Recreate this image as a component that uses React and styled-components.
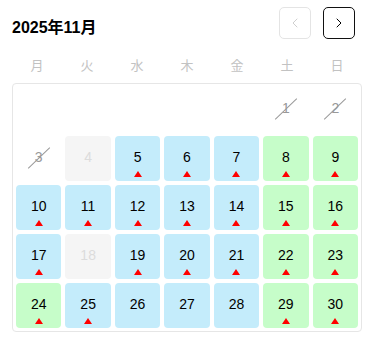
import React from 'react';
import styled, { createGlobalStyle } from 'styled-components';
import { ChevronLeft, ChevronRight } from 'lucide-react';

const GlobalStyle = createGlobalStyle`
  body {
    margin: 0;
    background: #fff;
    font-family: "Liberation Sans", "Noto Sans CJK JP", sans-serif;
  }
`;

const Page = styled.div`
  width: 350px;
  padding: 7px 12px;
`;

const Header = styled.div`
  display: flex;
  justify-content: space-between;
  align-items: center;
  height: 32px;
`;

const Title = styled.div`
  padding-top: 5px;
  font-size: 16px;
  font-weight: 700;
  color: #000;
`;

const NavGroup = styled.div`
  display: flex;
  gap: 12px;
  margin-right: 7px;
`;

const NavButton = styled.button`
  display: flex;
  align-items: center;
  justify-content: center;
  width: 32px;
  height: 32px;
  padding: 0;
  background: #fff;
  border: 1px solid ${(p) => (p.disabled ? '#e4e4e4' : '#111')};
  border-radius: 5px;
  color: ${(p) => (p.disabled ? '#cfcfcf' : '#000')};
`;

const WeekRow = styled.div`
  display: grid;
  grid-template-columns: repeat(7, 50px);
  margin-top: 13px;
  height: 24px;
  align-items: center;
`;

const WeekDay = styled.div`
  text-align: center;
  font-size: 13px;
  color: #c2c2c2;
`;

const Board = styled.div`
  margin-top: 7px;
  border: 1px solid #e6e6e6;
  border-radius: 4px;
  padding: 3px;
  display: grid;
  grid-template-columns: repeat(7, 1fr);
  grid-auto-rows: 45px;
  gap: 4px;
`;

const tones = {
  weekday: { bg: '#c4ecfb', fg: '#000' },
  holiday: { bg: '#c6fdc9', fg: '#000' },
  closed: { bg: '#f5f5f5', fg: '#dcdcdc' },
  past: { bg: 'transparent', fg: '#999' },
  empty: { bg: 'transparent', fg: 'transparent' },
};

const Cell = styled.div`
  position: relative;
  display: flex;
  flex-direction: column;
  align-items: center;
  padding-top: 13px;
  border-radius: 4px;
  background: ${(p) => tones[p.$tone].bg};
  color: ${(p) => tones[p.$tone].fg};
  font-size: 14px;
`;

const Num = styled.span`
  line-height: 16px;
`;

const Strike = styled.span`
  position: absolute;
  left: 50%;
  top: 22px;
  width: 30px;
  height: 1px;
  background: #999;
  transform: translate(-50%, -50%) rotate(-44deg);
`;

const Mark = styled.span`
  margin-top: 6px;
  width: 0;
  height: 0;
  border-left: 4px solid transparent;
  border-right: 4px solid transparent;
  border-bottom: 6px solid #f00;
`;

const weekdays = ['月', '火', '水', '木', '金', '土', '日'];

const blue = 'weekday';
const green = 'holiday';
const days = [
  ...Array(5).fill({ tone: 'empty' }),
  { n: 1, tone: 'past' },
  { n: 2, tone: 'past' },
  { n: 3, tone: 'past' },
  { n: 4, tone: 'closed' },
  { n: 5, tone: blue, mark: true },
  { n: 6, tone: blue, mark: true },
  { n: 7, tone: blue, mark: true },
  { n: 8, tone: green, mark: true },
  { n: 9, tone: green, mark: true },
  { n: 10, tone: blue, mark: true },
  { n: 11, tone: blue, mark: true },
  { n: 12, tone: blue, mark: true },
  { n: 13, tone: blue, mark: true },
  { n: 14, tone: blue, mark: true },
  { n: 15, tone: green, mark: true },
  { n: 16, tone: green, mark: true },
  { n: 17, tone: blue, mark: true },
  { n: 18, tone: 'closed' },
  { n: 19, tone: blue, mark: true },
  { n: 20, tone: blue, mark: true },
  { n: 21, tone: blue, mark: true },
  { n: 22, tone: green, mark: true },
  { n: 23, tone: green, mark: true },
  { n: 24, tone: green, mark: true },
  { n: 25, tone: blue, mark: true },
  { n: 26, tone: blue },
  { n: 27, tone: blue },
  { n: 28, tone: blue },
  { n: 29, tone: green, mark: true },
  { n: 30, tone: green, mark: true },
];

export default function App() {
  return (
    <Page>
      <GlobalStyle />
      <Header>
        <Title>2025年11月</Title>
        <NavGroup>
          <NavButton disabled>
            <ChevronLeft size={16} strokeWidth={1.5} />
          </NavButton>
          <NavButton>
            <ChevronRight size={16} strokeWidth={1.5} />
          </NavButton>
        </NavGroup>
      </Header>
      <WeekRow>
        {weekdays.map((w) => (
          <WeekDay key={w}>{w}</WeekDay>
        ))}
      </WeekRow>
      <Board>
        {days.map((d, i) => (
          <Cell key={i} $tone={d.tone}>
            <Num>{d.n}</Num>
            {d.mark && <Mark />}
            {d.tone === 'past' && <Strike />}
          </Cell>
        ))}
      </Board>
    </Page>
  );
}
